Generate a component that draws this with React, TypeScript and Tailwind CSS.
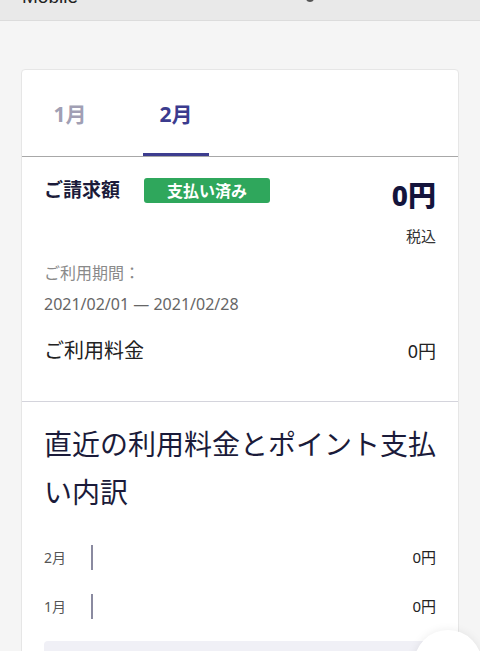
const font = { fontFamily: '"Noto Sans", "Noto Sans CJK JP", sans-serif' };

function Tab({ label, active }: { label: string; active?: boolean }) {
  return (
    <div className="relative flex h-[86px] w-[66px] items-center justify-center">
      <span className={`pt-[3px] text-[21px] font-bold ${active ? 'text-[#3b3b8e]' : 'text-[#a19fb4]'}`}>{label}</span>
      {active && <div className="absolute bottom-0 left-0 h-[3px] w-full bg-[#3d3d8f]"></div>}
    </div>
  );
}

function HistoryRow({ month, amount }: { month: string; amount: string }) {
  return (
    <div className="flex h-[25px] items-center">
      <span className="w-[47px] text-[14px] text-[#555]">{month}</span>
      <div className="h-full w-[1.5px] bg-[#8a8aa0]"></div>
      <span className="ml-auto text-[15px] text-[#222]">{amount}</span>
    </div>
  );
}

export default function App() {
  return (
    <div className="min-h-[651px] bg-[#f5f5f5] text-[#1b1b3a]" style={font}>
      <div className="relative h-[21px] overflow-hidden border-b border-[#dcdcdc] bg-[#e9e9e9]">
        <span className="absolute left-[22px] top-[-14px] text-[19px] leading-[22px] text-[#222]" style={{ fontFamily: '"Liberation Sans", sans-serif' }}>
          Mobile
        </span>
        <span className="absolute left-[306px] top-[-6px] h-[8px] w-[8px] rounded-full bg-[#555]"></span>
      </div>

      <div className="px-[21px] pt-12">
        <div className="overflow-hidden rounded-[4px] border border-[#e6e6e6] bg-white">
          <div className="flex gap-[40px] border-b border-[#a8a8a8] pl-[15px]">
            <Tab label="1月" />
            <Tab label="2月" active />
          </div>

          <div className="border-b border-[#d4d4dc] px-[22px] pb-[37px] pt-[21px]">
            <div className="flex items-start justify-between">
              <div className="flex h-[25px] items-center gap-[24px]">
                <span className="text-[19px] font-bold">ご請求額</span>
                <span className="flex h-[25px] w-[126px] items-center justify-center rounded-[3px] bg-[#2fa75c] text-[16px] font-bold text-white">
                  支払い済み
                </span>
              </div>
              <span className="text-[28px] font-extrabold leading-[34px] text-[#14143c]">0円</span>
            </div>
            <div className="mt-[13px] text-right text-[15px] leading-[22px] text-[#333]">税込</div>
            <div className="mt-[15px] text-[16px] leading-[22px] text-[#8a8a8a]">ご利用期間：</div>
            <div className="mt-[9px] text-[16px] leading-[22px] text-[#666]">2021/02/01 — 2021/02/28</div>
            <div className="mt-[23px] flex items-center justify-between leading-[26px]">
              <span className="text-[20px] text-[#222]">ご利用料金</span>
              <span className="text-[18px] text-[#222]">0円</span>
            </div>
          </div>

          <div className="px-[22px] pt-[18px]">
            <h2 className="text-[28px] leading-[48px] text-[#1b1b3a]">直近の利用料金とポイント支払い内訳</h2>
            <div className="mt-[29px] flex flex-col gap-[24px]">
              <HistoryRow month="2月" amount="0円" />
              <HistoryRow month="1月" amount="0円" />
            </div>
            <div className="mt-[22px] h-[40px] rounded-t-[4px] bg-[#f0f0f6]"></div>
          </div>
        </div>
      </div>

      <div className="fixed left-[414px] top-[630px] h-[68px] w-[68px] rounded-full bg-white shadow-[0_0_10px_rgba(0,0,0,0.08)]"></div>
    </div>
  );
}
